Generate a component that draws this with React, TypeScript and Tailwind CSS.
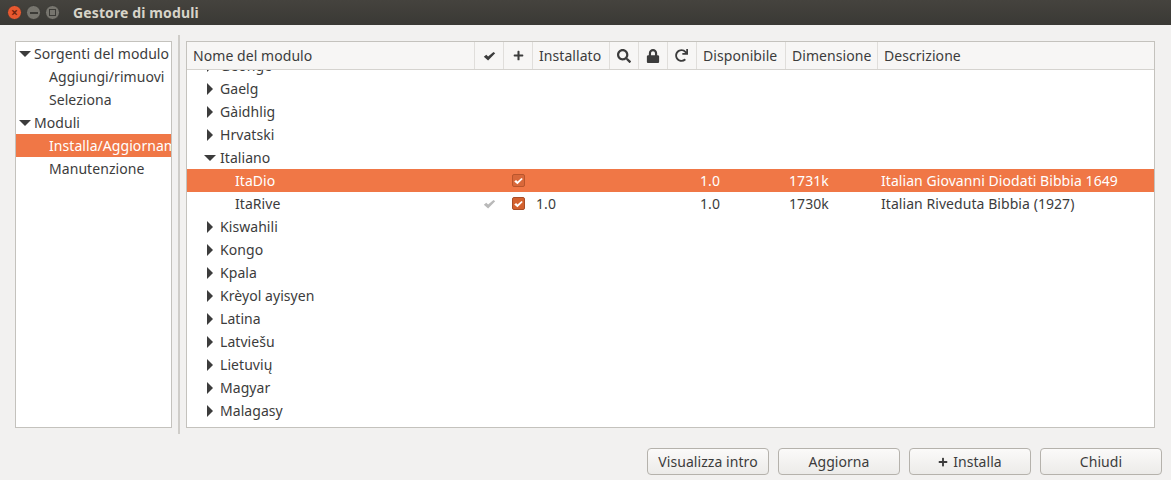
import { FaLock, FaPlus, FaRedo, FaSearch } from "react-icons/fa";
import type { ReactNode } from "react";

const CheckIcon = ({ className }: { className: string }) => (
  <svg viewBox="0 0 12 10" className={className} fill="currentColor">
    <path d="M0.3 5.8 L2.8 3.8 L4.6 5.5 L10 1 L11.7 2.2 L4.6 9.4 Z" />
  </svg>
);

const Arrow = ({ open }: { open: boolean }) =>
  open ? (
    <span className="h-0 w-0 border-x-[6px] border-t-[6px] border-x-transparent border-t-[#3c3c3c]" />
  ) : (
    <span className="h-0 w-0 border-y-[6px] border-l-[6px] border-y-transparent border-l-[#3c3c3c]" />
  );

const CheckBox = ({ selected }: { selected?: boolean }) => (
  <span
    className={`flex h-[13px] w-[13px] items-center justify-center rounded-[2px] border ${
      selected ? "border-[#b9552c] bg-[#d9683a]" : "border-[#a94e28] bg-[#d4622f]"
    }`}
  >
    <CheckIcon className="h-[8px] w-[9px] text-white" />
  </span>
);

const headers: { width: string; label: ReactNode; center?: boolean }[] = [
  { width: "w-[288px]", label: "Nome del modulo" },
  { width: "w-[29px]", label: <CheckIcon className="h-[10px] w-[13px]" />, center: true },
  { width: "w-[29px]", label: <FaPlus className="text-[11px]" />, center: true },
  { width: "w-[77px]", label: "Installato" },
  { width: "w-[29px]", label: <FaSearch className="text-[14px]" />, center: true },
  { width: "w-[29px]", label: <FaLock className="text-[14px]" />, center: true },
  { width: "w-[29px]", label: <FaRedo className="-ml-[2px] text-[13px]" />, center: true },
  { width: "w-[89px]", label: "Disponibile" },
  { width: "w-[92px]", label: "Dimensione" },
  { width: "flex-1", label: "Descrizione" },
];

const collapsedBefore = ["Geonge", "Gaelg", "Gàidhlig", "Hrvatski"];
const collapsedAfter = [
  "Kiswahili",
  "Kongo",
  "Kpala",
  "Krèyol ayisyen",
  "Latina",
  "Latviešu",
  "Lietuvių",
  "Magyar",
  "Malagasy",
];

const LangRow = ({ name, open = false }: { name: string; open?: boolean }) => (
  <div className="flex h-[23px] items-center">
    <span className="flex w-[32px] shrink-0 justify-center pl-[14px]">
      <Arrow open={open} />
    </span>
    <span className="pl-[1px]">{name}</span>
  </div>
);

const ModuleRow = ({
  name,
  installed,
  size,
  description,
  selected,
}: {
  name: string;
  installed?: string;
  size: string;
  description: string;
  selected?: boolean;
}) => (
  <div className={`flex h-[23px] items-center ${selected ? "bg-[#f07746] text-white" : ""}`}>
    <span className="w-[288px] pl-[48px]">{name}</span>
    <span className="flex w-[29px] justify-center">
      {installed && <CheckIcon className="h-[10px] w-[13px] text-[#b9b9b9]" />}
    </span>
    <span className="flex w-[29px] justify-center">
      <CheckBox selected={selected} />
    </span>
    <span className="w-[164px] pl-[3px]">{installed}</span>
    <span className="w-[89px] pl-[3px]">1.0</span>
    <span className="w-[92px] pl-[3px]">{size}</span>
    <span className="flex-1 pl-[3px]">{description}</span>
  </div>
);

const Button = ({ children }: { children: ReactNode }) => (
  <button className="flex h-[27px] w-[122px] items-center justify-center gap-[5px] rounded-[4px] border border-[#b5b2ac] bg-gradient-to-b from-[#fbfaf9] to-[#ecebe9] text-[14px] text-[#3c3c3c]">
    {children}
  </button>
);

export default function App() {
  return (
    <div className="flex h-[480px] w-[1171px] flex-col overflow-hidden bg-[#f2f1f0] font-['Noto_Sans',sans-serif] text-[14px] tracking-[0.06px] text-[#3c3c3c]">
      <div className="flex h-[25px] items-center bg-gradient-to-b from-[#45433e] to-[#3a3935] pl-[7px]">
        <span className="flex h-[15px] w-[15px] items-center justify-center rounded-full border border-[#3a3935] bg-[#e8582f] text-[12px] leading-none font-bold text-[#6e2410]">
          ×
        </span>
        <span className="ml-[4px] flex h-[15px] w-[15px] items-center justify-center rounded-full border border-[#3a3935] bg-[#77756e]">
          <span className="h-[2px] w-[8px] bg-[#3c3b37]" />
        </span>
        <span className="ml-[4px] flex h-[15px] w-[15px] items-center justify-center rounded-full border border-[#3a3935] bg-[#77756e]">
          <span className="h-[7px] w-[7px] border border-[#3c3b37]" />
        </span>
        <span className="ml-[13px] text-[14px] font-bold tracking-[0.12px] text-[#d8d4c9]">Gestore di moduli</span>
      </div>

      <div className="flex h-[409px] pt-[10px] pl-[15px] pr-[16px]">
        <div className="mt-[6px] mb-[6px] w-[157px] overflow-hidden border border-[#c4c2bd] bg-white">
          <div className="flex h-[23px] items-center whitespace-nowrap">
            <span className="flex w-[18px] shrink-0 justify-center">
              <Arrow open />
            </span>
            Sorgenti del modulo
          </div>
          <div className="flex h-[23px] items-center pl-[33px]">Aggiungi/rimuovi</div>
          <div className="flex h-[23px] items-center pl-[33px]">Seleziona</div>
          <div className="flex h-[23px] items-center">
            <span className="flex w-[18px] shrink-0 justify-center">
              <Arrow open />
            </span>
            Moduli
          </div>
          <div className="flex h-[23px] items-center whitespace-nowrap bg-[#f07746] pl-[33px] text-white">
            Installa/Aggiornamento
          </div>
          <div className="flex h-[23px] items-center pl-[33px]">Manutenzione</div>
        </div>

        <div className="mx-[6px] w-[2px] bg-[#cfcdc9]" />

        <div className="mt-[6px] mb-[6px] flex flex-1 flex-col overflow-hidden border border-[#c4c2bd] bg-white">
          <div className="flex h-[28px] shrink-0 border-b border-[#d5d3cf] bg-[#f7f6f5]">
            {headers.map((h, i) => (
              <div
                key={i}
                className={`flex ${h.width} items-center border-r border-[#e0dedb] last:border-r-0 ${
                  h.center ? "justify-center" : "pl-[6px]"
                }`}
              >
                {h.label}
              </div>
            ))}
          </div>
          <div className="flex-1 overflow-hidden">
            <div className="-mt-[16px]">
              {collapsedBefore.map((name) => (
                <LangRow key={name} name={name} />
              ))}
              <LangRow name="Italiano" open />
              <ModuleRow
                name="ItaDio"
                size="1731k"
                description="Italian Giovanni Diodati Bibbia 1649"
                selected
              />
              <ModuleRow
                name="ItaRive"
                installed="1.0"
                size="1730k"
                description="Italian Riveduta Bibbia (1927)"
              />
              {collapsedAfter.map((name) => (
                <LangRow key={name} name={name} />
              ))}
            </div>
          </div>
        </div>
      </div>

      <div className="flex justify-end gap-[9px] pt-[14px] pr-[9px]">
        <Button>Visualizza intro</Button>
        <Button>Aggiorna</Button>
        <Button>
          <FaPlus className="text-[10px]" />
          Installa
        </Button>
        <Button>Chiudi</Button>
      </div>
    </div>
  );
}
